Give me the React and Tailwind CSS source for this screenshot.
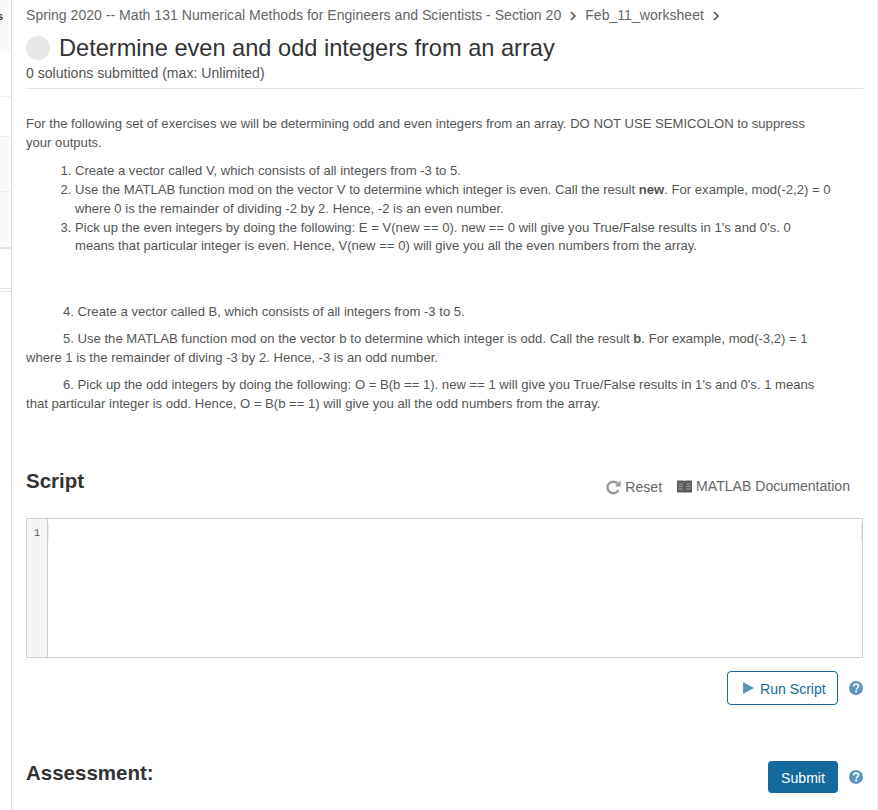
function HelpIcon() {
  return (
    <svg width="14" height="14" viewBox="0 0 14 14" className="block shrink-0">
      <circle cx="7" cy="7" r="7" fill="#5b95bd" />
      <path d="M4.6 5.4C4.7 4 5.7 3.2 7.1 3.2c1.4 0 2.4.8 2.4 2 0 1-.6 1.4-1.2 1.8-.5.3-.7.6-.7 1.1v.3" fill="none" stroke="#fff" strokeWidth="1.7" />
      <rect x="6.2" y="9.5" width="1.8" height="1.8" fill="#fff" />
    </svg>
  );
}

function Chevron() {
  return (
    <svg width="8" height="10" viewBox="0 0 8 10" className="mx-[8px]">
      <path d="M2 1l4 4-4 4" fill="none" stroke="#555" strokeWidth="1.6" />
    </svg>
  );
}

function ResetIcon() {
  return (
    <svg width="15" height="15" viewBox="0 0 15 15" className="mr-[4px]">
      <path d="M12.4 10.2A5.8 5.8 0 1 1 11.4 3.4" fill="none" stroke="#999" strokeWidth="2.5" />
      <path d="M14.6 0.6v6H8.6z" fill="#999" />
    </svg>
  );
}

function BookIcon() {
  return (
    <svg width="15" height="13" viewBox="0 0 15 13" className="mr-[4px]">
      <path d="M0 0.5h6.8l.7.7.7-.7H15V12.5H8.2l-.7.5-.7-.5H0z" fill="#5c5c5c" />
      <path d="M1.5 4h4.2M1.5 6.5h4.2M1.5 9h4.2M9.3 4h4.2M9.3 6.5h4.2M9.3 9h4.2" stroke="#aaa" strokeWidth="0.9" />
    </svg>
  );
}

export default function App() {
  return (
    <div className="flex h-[810px] w-[878px] overflow-hidden border-r border-[#eee] bg-white font-['Liberation_Sans',Arial,sans-serif] text-[#555]">
      {/* clipped left nav */}
      <aside className="flex w-[12px] shrink-0 flex-col overflow-hidden border-r border-[#ddd]">
        <div className="h-[52px] bg-[#fafafa] pt-[9px] text-[11px] leading-[14px] font-bold text-[#333]">
          <span className="-ml-[3px] block">s</span>
        </div>
        <div className="h-[45px] border-b border-[#eee]" />
        <div className="h-[40px] border-b border-[#eee]" />
        <div className="h-[55px] border-b border-[#eee] bg-[#fafafa]" />
        <div className="h-[57px] border-b-2 border-[#e5e5e5] bg-[#fafafa]" />
        <div className="h-[40px] border-b border-[#e5e5e5]" />
        <div className="h-[3px] border-b border-[#e5e5e5]" />
      </aside>

      <main className="flex w-[851px] shrink-0 flex-col pl-[14px]">
        <div className="flex h-[30px] items-center pt-[1px] text-[14.08px] text-[#666]">
          <span>Spring 2020 -- Math 131 Numerical Methods for Engineers and Scientists - Section 20</span>
          <Chevron />
          <span>Feb_11_worksheet</span>
          <Chevron />
        </div>
        <div className="flex h-[36px] items-center">
          <div className="mr-[9px] h-[24px] w-[24px] rounded-full bg-[#e6e6e6]" />
          <h1 className="text-[23.6px] leading-[36px] text-[#333]">Determine even and odd integers from an array</h1>
        </div>
        <p className="h-[22px] text-[14.08px] leading-[14px] text-[#555]">0 solutions submitted (max: Unlimited)</p>
        <div className="border-b border-[#e5e5e5]" />

        <div className="w-[806px] pt-[26px] text-[13.1px] leading-[18.9px] text-[#555]">
          <p>
            For the following set of exercises we will be determining odd and even integers from an array. DO NOT USE SEMICOLON to suppress your outputs.
          </p>
          <ol className="mt-[9px] list-decimal pl-[49px]">
            <li>Create a vector called V, which consists of all integers from -3 to 5.</li>
            <li>
              Use the MATLAB function mod on the vector V to determine which integer is even. Call the result <b>new</b>. For example, mod(-2,2) = 0 where 0 is the remainder of dividing -2 by 2. Hence, -2 is an even number.
            </li>
            <li>
              Pick up the even integers by doing the following: E = V(new == 0). new == 0 will give you True/False results in 1's and 0's. 0 means that particular integer is even. Hence, V(new == 0) will give you all the even numbers from the array.
            </li>
          </ol>
          <p className="mt-[47px] indent-[37px]">4. Create a vector called B, which consists of all integers from -3 to 5.</p>
          <p className="mt-[8px] indent-[37px]">
            5. Use the MATLAB function mod on the vector b to determine which integer is odd. Call the result <b>b</b>. For example, mod(-3,2) = 1 where 1 is the remainder of diving -3 by 2. Hence, -3 is an odd number.
          </p>
          <p className="mt-[8px] indent-[37px]">
            6. Pick up the odd integers by doing the following: O = B(b == 1). new == 1 will give you True/False results in 1's and 0's. 1 means that particular integer is odd. Hence, O = B(b == 1) will give you all the odd numbers from the array.
          </p>
        </div>

        <div className="mt-[49px] flex h-[36px] items-center justify-between">
          <h2 className="text-[20.5px] font-bold text-[#333]">Script</h2>
          <div className="mr-[13px] flex items-center pt-[12px] text-[14.08px] text-[#666]">
            <span className="mr-[15px] flex items-center pt-[2px]">
              <ResetIcon />
              Reset
            </span>
            <span className="flex items-center">
              <BookIcon />
              MATLAB Documentation
            </span>
          </div>
        </div>

        <div className="mt-[19px] flex h-[140px] border border-[#ccc]">
          <div className="w-[21px] shrink-0 border-r border-[#ccc] bg-[#f5f5f5] pt-[8px] text-center font-['Liberation_Mono',monospace] text-[10px] leading-[13px] text-[#555]">
            1
          </div>
          <div className="flex flex-1 items-start justify-between pt-[4px]">
            <div className="h-[19px] w-px bg-[#eee]" />
            <div className="h-[19px] w-px bg-[#e5e5e5]" />
          </div>
        </div>

        <div className="mt-[13px] flex items-center justify-end">
          <button className="flex h-[34px] w-[111px] items-center rounded-[4px] border border-[#146a9c] bg-white pt-[4px] pl-[15px] text-[14.08px] text-[#146a9c]">
            <svg width="11" height="12" viewBox="0 0 11 12" className="mr-[6px] -mt-[4px]">
              <path d="M0 0l11 6-11 6z" fill="#5b95bd" />
            </svg>
            Run Script
          </button>
          <span className="ml-[11px]"><HelpIcon /></span>
        </div>

        <div className="mt-[53px] flex items-center justify-between">
          <h2 className="mb-[8px] text-[20.5px] font-bold text-[#333]">Assessment:</h2>
          <div className="flex items-center">
            <button className="h-[32px] w-[70px] rounded-[4px] bg-[#146a9c] pt-[2px] text-[14.08px] text-white">Submit</button>
            <span className="ml-[11px]"><HelpIcon /></span>
          </div>
        </div>
      </main>
    </div>
  );
}
